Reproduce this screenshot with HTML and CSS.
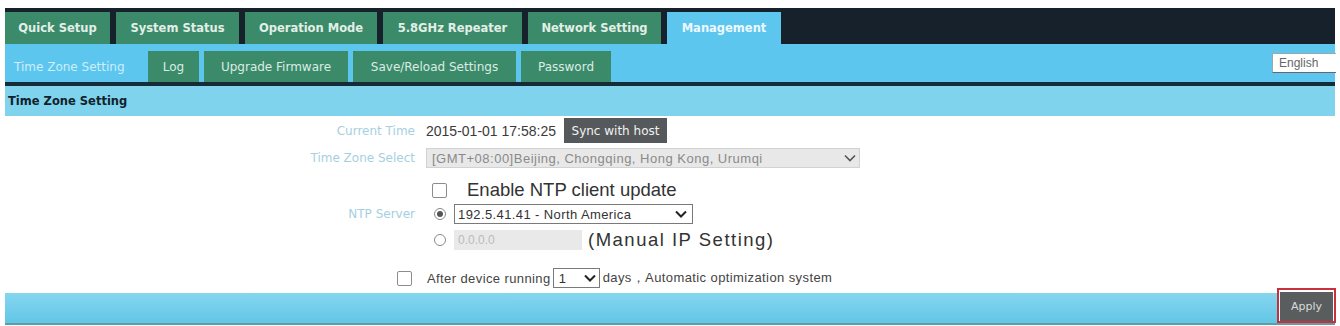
FILE: index.html
```html
<!DOCTYPE html>
<html lang="en">
<head>
<meta charset="utf-8">
<title>Time Zone Setting</title>
<link rel="stylesheet" href="styles.css">
</head>
<body>
<div class="page">
  <nav class="topnav">
    <a class="tab t1">Quick Setup</a>
    <a class="tab t2">System Status</a>
    <a class="tab t3">Operation Mode</a>
    <a class="tab t4">5.8GHz Repeater</a>
    <a class="tab t5">Network Setting</a>
    <a class="tab t6 active">Management</a>
  </nav>
  <nav class="subnav">
    <a class="sub current">Time Zone Setting</a>
    <a class="sub s1">Log</a>
    <a class="sub s2">Upgrade Firmware</a>
    <a class="sub s3">Save/Reload Settings</a>
    <a class="sub s4">Password</a>
    <div class="lang">English</div>
  </nav>
  <div class="rule"></div>
  <div class="section-head">Time Zone Setting</div>

  <div class="form">
    <div class="row r1">
      <div class="label">Current Time</div>
      <div class="field">
        <span class="value">2015-01-01 17:58:25</span>
        <button class="btn-dark">Sync with host</button>
      </div>
    </div>
    <div class="row r2">
      <div class="label">Time Zone Select</div>
      <div class="field">
        <div class="select tz">
          <span>[GMT+08:00]Beijing, Chongqing, Hong Kong, Urumqi</span>
          <svg class="chev" viewBox="0 0 12 8" width="12" height="8"><path d="M1 1.5 L6 6.5 L11 1.5" fill="none" stroke="#555" stroke-width="1.6"/></svg>
        </div>
      </div>
    </div>
    <div class="row r3">
      <div class="label"></div>
      <div class="field">
        <span class="check big"></span>
        <span class="large">Enable NTP client update</span>
      </div>
    </div>
    <div class="row r4">
      <div class="label">NTP Server</div>
      <div class="field">
        <span class="radio on"></span>
        <div class="select ntp">
          <span>192.5.41.41 - North America</span>
          <svg class="chev" viewBox="0 0 12 8" width="12" height="8"><path d="M1 1.5 L6 6.5 L11 1.5" fill="none" stroke="#222" stroke-width="2"/></svg>
        </div>
      </div>
    </div>
    <div class="row r5">
      <div class="label"></div>
      <div class="field">
        <span class="radio"></span>
        <div class="ipbox">0.0.0.0</div>
        <span class="large manual">(Manual IP Setting)</span>
      </div>
    </div>
    <div class="row r6">
      <span class="check"></span>
      <span class="small">After device running</span>
      <div class="select days">
        <span>1</span>
        <svg class="chev" viewBox="0 0 12 8" width="12" height="8"><path d="M1 1.5 L6 6.5 L11 1.5" fill="none" stroke="#222" stroke-width="2"/></svg>
      </div>
      <span class="small">days，Automatic optimization system</span>
    </div>
  </div>

  <div class="footer-bar">
    <div class="apply-wrap"><button class="btn-apply">Apply</button></div>
  </div>
</div>
</body>
</html>
```

FILE: styles.css
```css
* { box-sizing: border-box; }
html, body { margin: 0; padding: 0; background: #ffffff; }
body { font-family: "DejaVu Sans", Verdana, sans-serif; }

.page {
  width: 1340px;
  padding: 8px 5px 0 5px;
}

/* top navigation */
.topnav {
  display: flex;
  gap: 6px;
  height: 36px;
  padding-top: 4px;
  background: #17212b;
}
.tab {
  display: flex;
  align-items: center;
  justify-content: center;
  height: 32px;
  background: #3b8b6b;
  color: #e3efe6;
  font-size: 11.5px;
  font-weight: bold;
  white-space: nowrap;
}
.t1 { width: 105px; }
.t2 { width: 123px; }
.t3 { width: 132px; }
.t4 { width: 139px; }
.t5 { width: 133px; }
.t6 { width: 114px; }
.tab.active { background: #5cc6ef; color: #eef8fc; }

/* sub navigation */
.subnav {
  display: flex;
  align-items: flex-end;
  gap: 5px;
  height: 38px;
  background: #5cc6ef;
}
.sub {
  display: flex;
  align-items: center;
  justify-content: center;
  height: 31px;
  background: #3b8b6b;
  color: #dcece2;
  font-size: 12px;
  white-space: nowrap;
}
.sub.current {
  width: 138px;
  justify-content: flex-start;
  padding-left: 9px;
  background: transparent;
  color: #cdeefa;
}
.s1 { width: 51px; }
.s2 { width: 144px; }
.s3 { width: 163px; }
.s4 { width: 90px; }
.lang {
  margin-left: auto;
  align-self: flex-start;
  margin-top: 9px;
  margin-right: -1px;
  width: 64px;
  height: 20px;
  background: #fff;
  border-top: 1px solid #9aa;
  border-left: 1px solid #9aa;
  border-bottom: 1px solid #667;
  color: #666;
  font-family: "Liberation Sans", Arial, sans-serif;
  font-size: 12px;
  line-height: 18px;
  padding-left: 6px;
  overflow: hidden;
}

.rule { height: 4px; background: #152c38; }

.section-head {
  height: 30px;
  background: #7fd3ec;
  color: #12222c;
  font-size: 11.5px;
  font-weight: bold;
  padding-left: 3px;
  display: flex;
  align-items: center;
}

/* form */
.form { display: flex; flex-direction: column; }
.row { display: flex; align-items: center; }
.label {
  width: 410px;
  text-align: right;
  color: #a6cfe1;
  font-size: 12px;
  white-space: nowrap;
}
.field {
  display: flex;
  align-items: center;
  margin-left: 11px;
}
.r1 { margin-top: 2px; height: 25px; }
.r2 { margin-top: 5px; height: 20px; }
.r3 { margin-top: 8px; height: 28px; }
.r4 { height: 20px; }
.r5 { margin-top: 6px; height: 20px; }
.r6 { margin-top: 18px; height: 20px; padding-left: 392px; }

.value {
  font-family: "Liberation Sans", Arial, sans-serif;
  font-size: 14px;
  color: #3a3a3a;
  width: 138px;
}
.btn-dark {
  height: 25px;
  width: 103px;
  border: 0;
  background: #55595b;
  color: #f2f2f2;
  font-family: "DejaVu Sans", Verdana, sans-serif;
  font-size: 12px;
  padding: 0;
}

.select {
  display: flex;
  align-items: center;
  justify-content: space-between;
  height: 20px;
  font-family: "Liberation Sans", Arial, sans-serif;
  white-space: nowrap;
}
.select.tz {
  width: 434px;
  background: #e8e8e8;
  border: 1px solid #d2d2d2;
  color: #8a8a8a;
  font-size: 13px;
  letter-spacing: 0.5px;
  padding: 0 3px 0 5px;
}
.select.ntp {
  width: 239px;
  background: #fff;
  border: 1px solid #7a7a7a;
  color: #333;
  font-size: 13px;
  letter-spacing: 0.4px;
  padding: 0 5px 0 3px;
  margin-left: 8px;
}
.select.days {
  width: 47px;
  background: #fff;
  border: 1px solid #7a7a7a;
  color: #333;
  font-size: 13px;
  padding: 0 3px 0 5px;
  margin: 0 3px 0 2px;
}

.check {
  display: inline-block;
  width: 15px;
  height: 15px;
  border: 1px solid #8c8c8c;
  border-radius: 2px;
  background: #fff;
}
.check.big { margin-left: 6px; }
.r6 .check { margin-right: 15px; }

.large {
  font-family: "Liberation Sans", Arial, sans-serif;
  font-size: 18.5px;
  color: #333;
  margin-left: 20px;
  white-space: nowrap;
}
.large.manual { margin-left: 6px; letter-spacing: 1.5px; }

.radio {
  display: inline-block;
  width: 12px;
  height: 12px;
  border: 1px solid #8a8a8a;
  border-radius: 50%;
  background: #fff;
  margin-left: 8px;
  position: relative;
}
.radio.on::after {
  content: "";
  position: absolute;
  left: 2px;
  top: 2px;
  width: 6px;
  height: 6px;
  border-radius: 50%;
  background: #555;
}
.ipbox {
  width: 128px;
  height: 20px;
  margin-left: 8px;
  background: #e9e9e9;
  color: #bbb;
  font-family: "Liberation Sans", Arial, sans-serif;
  font-size: 12px;
  line-height: 20px;
  padding-left: 4px;
}

.small {
  font-family: "Liberation Sans", Arial, sans-serif;
  font-size: 13px;
  letter-spacing: 0.4px;
  color: #444;
  white-space: nowrap;
}

/* footer */
.footer-bar {
  margin-top: 5px;
  height: 32px;
  background: linear-gradient(#86d6ef, #62c6e6);
  border-bottom: 2px solid #5e9ea6;
  display: flex;
  justify-content: flex-end;
}
.apply-wrap {
  margin-top: -5px;
  margin-right: -1px;
  height: 35px;
  border: 2px solid #c7303c;
  padding: 2px 1px 0 1px;
  background: #fff;
}
.btn-apply {
  display: block;
  width: 53px;
  height: 29px;
  border: 0;
  background: #5a5d5d;
  color: #d8dcdc;
  font-family: "DejaVu Sans", Verdana, sans-serif;
  font-size: 11px;
  padding: 0;
}
```
